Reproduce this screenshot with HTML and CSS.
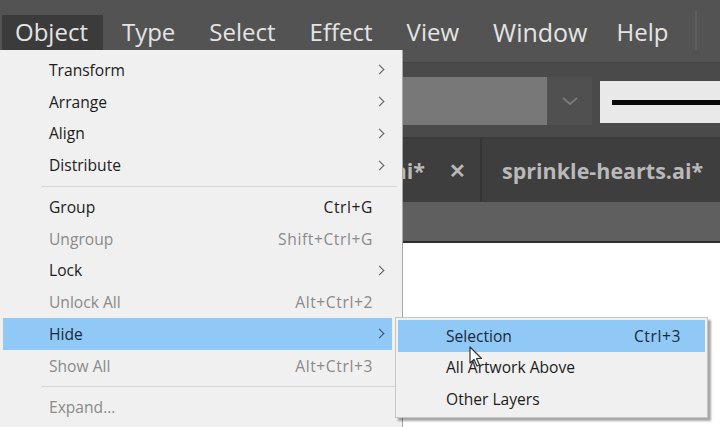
FILE: index.html
```html
<!DOCTYPE html>
<html lang="en">
<head>
  <meta charset="UTF-8" />
  <title>Object menu</title>
  <link rel="stylesheet" href="styles.css">
</head>
<body>
  <div class="app">
    <div class="menubar">
      <div class="menubar-item active">Object</div>
      <div class="menubar-item">Type</div>
      <div class="menubar-item">Select</div>
      <div class="menubar-item">Effect</div>
      <div class="menubar-item">View</div>
      <div class="menubar-item">Window</div>
      <div class="menubar-item">Help</div>
      <div class="menubar-sep"></div>
    </div>
    <div class="strip"></div>

    <div class="toolbar">
      <div class="field"></div>
      <div class="field-drop">
        <svg width="18" height="10" viewBox="0 0 18 10"><polyline points="2,2 9,8 16,2" fill="none" stroke="#7a7a7a" stroke-width="2"/></svg>
      </div>
      <div class="stroke-box"><div class="stroke-line"></div></div>
    </div>

    <div class="tabs">
      <div class="tab">
        <span class="tab-name">hearts.ai*</span>
        <span class="tab-close">&#x2715;</span>
      </div>
      <div class="tab">
        <span class="tab-name">sprinkle-hearts.ai*</span>
      </div>
    </div>
    <div class="band"></div>
    <div class="canvas"></div>
  </div>

  <div class="dropdown">
    <div class="row"><span>Transform</span><span class="chev"></span></div>
    <div class="row"><span>Arrange</span><span class="chev"></span></div>
    <div class="row"><span>Align</span><span class="chev"></span></div>
    <div class="row"><span>Distribute</span><span class="chev"></span></div>
    <div class="sep"></div>
    <div class="row"><span>Group</span><span class="key">Ctrl+G</span></div>
    <div class="row off"><span>Ungroup</span><span class="key">Shift+Ctrl+G</span></div>
    <div class="row"><span>Lock</span><span class="chev"></span></div>
    <div class="row off"><span>Unlock All</span><span class="key">Alt+Ctrl+2</span></div>
    <div class="row hot"><span>Hide</span><span class="chev"></span></div>
    <div class="row off"><span>Show All</span><span class="key">Alt+Ctrl+3</span></div>
    <div class="sep"></div>
    <div class="row off"><span>Expand...</span></div>
  </div>

  <div class="submenu">
    <div class="row hot"><span>Selection</span><span class="key">Ctrl+3</span></div>
    <div class="row"><span>All Artwork Above</span></div>
    <div class="row"><span>Other Layers</span></div>
  </div>

  <svg class="cursor" width="14" height="22" viewBox="0 0 14 22">
    <path d="M1 1 L1 17 L5 13.5 L8 20 L10.5 19 L7.5 12.5 L12.5 12.5 Z" fill="#fff" stroke="#333" stroke-width="1.2" stroke-linejoin="round"/>
  </svg>
</body>
</html>
```

FILE: styles.css
```css
* {
  box-sizing: border-box;
}

body {
  margin: 0;
  width: 720px;
  height: 427px;
  overflow: hidden;
  position: relative;
  font-family: 'Open Sans', 'Noto Sans', sans-serif;
  background: #fff;
}

.app {
  display: flex;
  flex-direction: column;
  height: 427px;
}

/* top menu bar */
.menubar {
  height: 50px;
  background: #535353;
  display: flex;
  align-items: flex-end;
  padding-left: 2px;
}

.menubar-item {
  height: 35px;
  padding: 0 15px 2px 13px;
  display: flex;
  align-items: center;
  color: #e4e4e4;
  font-size: 24px;
  margin-right: 6px;
}

.menubar-item:nth-child(6) {
  font-size: 25px;
  margin-right: 1px;
}

.menubar-item.active {
  background: #3b3b3b;
}

.menubar-sep {
  width: 2px;
  height: 40px;
  margin-left: 6px;
  align-self: center;
  margin-top: 10px;
  background: #5e5e5e;
}

.strip {
  height: 13px;
  background: #535353;
  border-bottom: 1px solid #444;
}

/* control bar */
.toolbar {
  height: 76px;
  background: #4a4a4a;
  border-bottom: 2px solid #3a3a3a;
  display: flex;
  align-items: flex-start;
}

.field {
  width: 547px;
  height: 48px;
  margin-top: 14px;
  background: #787878;
}

.field-drop {
  width: 45px;
  height: 48px;
  margin-top: 14px;
  background: #505050;
  display: flex;
  align-items: center;
  justify-content: center;
}

.stroke-box {
  flex: 1;
  height: 42px;
  margin: 18px 0 0 8px;
  background: #e9e9e9;
  display: flex;
  align-items: center;
  padding-left: 12px;
}

.stroke-line {
  width: 100%;
  height: 5px;
  background: #0a0a0a;
}

/* document tabs */
.tabs {
  height: 63px;
  background: #3e3e3e;
  display: flex;
  overflow: hidden;
}

.tab {
  flex: none;
  display: flex;
  align-items: center;
  padding: 0 20px;
  color: #b9b9b9;
  font-size: 21.5px;
  font-weight: 700;
  white-space: nowrap;
}

.tab:first-child {
  width: 482px;
  justify-content: flex-end;
  border-right: 2px solid #353535;
  padding-right: 14px;
}

.tab-close {
  margin-left: 24px;
  font-size: 20px;
}

.band {
  height: 41px;
  background: #5f5f5f;
  border-bottom: 2px solid #2e2e2e;
}

.canvas {
  flex: 1;
  background: #fff;
}

/* menus */
.dropdown {
  position: absolute;
  left: 0;
  top: 50px;
  width: 403px;
  height: 390px;
  padding-top: 4px;
  background: #f0f0f0;
  border-right: 1px solid #a8a8a8;
}

.row {
  height: 31.75px;
  display: flex;
  align-items: center;
  justify-content: space-between;
  margin: 0 10px 0 3px;
  padding: 0 20px 0 46px;
  font-size: 15.6px;
  color: #1c1c1c;
}

.key {
  letter-spacing: 0.6px;
  margin-right: -1px;
}

.row.off {
  color: #8a8a8a;
}

.row.hot {
  background: #90c8f6;
  color: #182838;
}

.chev {
  width: 7px;
  height: 7px;
  border-right: 1.6px solid #5a5a5a;
  border-top: 1.6px solid #5a5a5a;
  transform: rotate(45deg);
  margin-right: -11px;
}

.row.hot .chev {
  border-color: #2f4f70;
}

.sep {
  height: 10px;
  margin-left: 42px;
  margin-right: 5px;
  display: flex;
  align-items: center;
}

.sep::before {
  content: "";
  flex: 1;
  height: 1px;
  background: #d6d6d6;
}

.submenu {
  position: absolute;
  left: 395px;
  top: 317px;
  width: 313px;
  height: 101px;
  padding-top: 2px;
  background: #f0f0f0;
  border: 1px solid #c6c6c6;
  box-shadow: 3px 3px 2px rgba(0, 0, 0, 0.35);
}

.submenu .row {
  height: 31.5px;
  margin: 0 2px;
  padding: 0 25px 0 48px;
}

.cursor {
  position: absolute;
  left: 469px;
  top: 346px;
}
```
